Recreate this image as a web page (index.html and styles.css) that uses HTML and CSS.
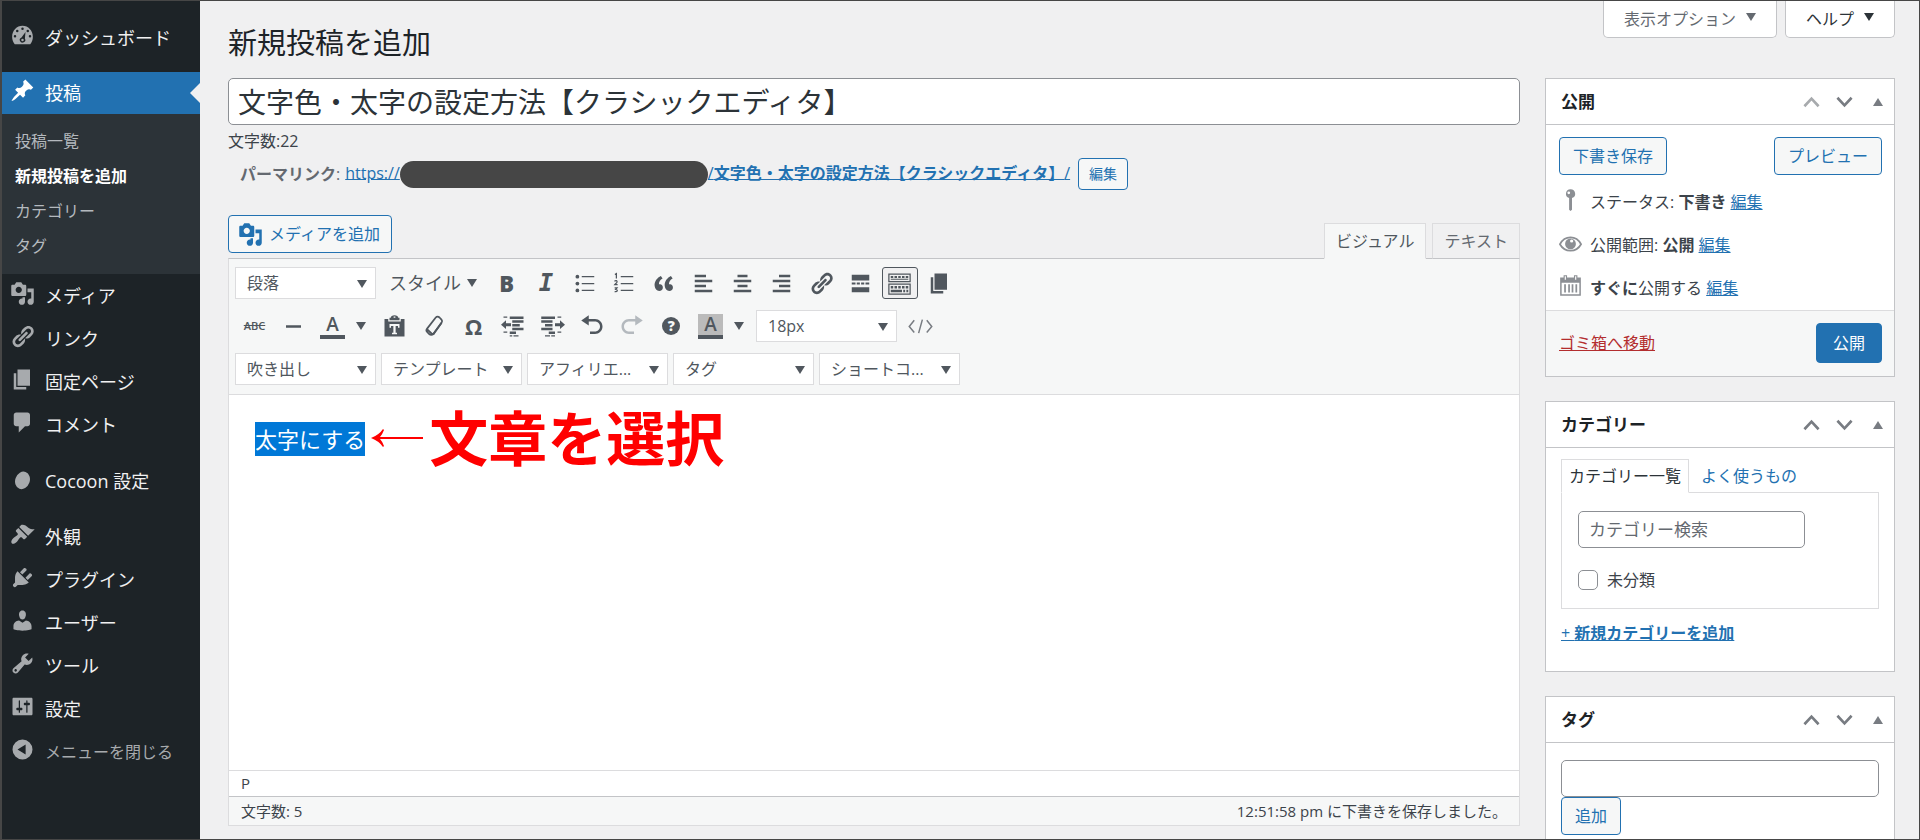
FILE: index.html
```html
<!DOCTYPE html>
<html lang="ja">
<head>
<meta charset="utf-8">
<title>新規投稿を追加</title>
<link rel="stylesheet" href="styles.css">
</head>
<body>
<svg class="defs" aria-hidden="true">
  <symbol id="i-dashboard" viewBox="0 0 20 20"><path fill-rule="evenodd" d="M3.8 17C2.6 15.4 1.700 13.600 1.700 11 1.700 6 5.400 2.200 10 2.200S18.300 6 18.300 11c0 2.600-.9 4.400-2.100 6zM10 3.600a1 1 0 1 0 0 2 1 1 0 0 0 0-2zM5.800 5.300a1 1 0 1 0 0 2 1 1 0 0 0 0-2zM14.200 5.300a1 1 0 1 0 0 2 1 1 0 0 0 0-2zM4 9.500a1 1 0 1 0 0 2 1 1 0 0 0 0-2zM16 9.500a1 1 0 1 0 0 2 1 1 0 0 0 0-2zM12.400 7.200L9.200 11.500a2.200 2.200 0 1 0 2.700.9zM10 12.600a1 1 0 1 1 0 2 1 1 0 0 1 0-2z"/></symbol>
  <symbol id="i-pin" viewBox="0 0 20 20"><path d="M10.440 3.020l1.820-1.820 6.360 6.350-1.830 1.820c-1.050-.68-2.480-.57-3.410.36l-.75.75c-.92.93-1.040 2.350-.35 3.410l-1.830 1.820-2.410-2.410-2.800 2.790c-.42.42-3.380 2.710-3.800 2.290s1.860-3.390 2.280-3.810l2.790-2.790L4.100 9.360l1.830-1.820c1.050.69 2.480.57 3.400-.36l.75-.75c.93-.92 1.050-2.350.36-3.410z"/></symbol>
  <symbol id="i-media" viewBox="0 0 20 20"><path fill-rule="evenodd" d="M13 11V4c0-.55-.45-1-1-1h-1.670L9 1H5L3.670 3H2c-.55 0-1 .45-1 1v7c0 .55.45 1 1 1h10c.55 0 1-.45 1-1zM7 4.500c1.380 0 2.500 1.120 2.500 2.500S8.380 9.500 7 9.500 4.500 8.380 4.500 7 5.620 4.500 7 4.500zM14 6h5v10.500c0 1.380-1.120 2.500-2.500 2.500S14 17.880 14 16.500s1.120-2.500 2.500-2.500c.17 0 .34.02.5.05V9h-3V6zm-4 8.050V13h2v3.500c0 1.380-1.120 2.500-2.500 2.500S7 17.880 7 16.500 8.120 14 9.500 14c.17 0 .34.02.5.05z"/></symbol>
  <symbol id="i-link" viewBox="0 0 20 20"><path d="M17.740 2.760c1.680 1.690 1.680 4.410 0 6.100l-1.530 1.520c-1.120 1.120-2.700 1.470-4.140 1.090l2.620-2.610.76-.77.76-.76c.84-.84.84-2.200 0-3.040-.84-.85-2.200-.85-3.040 0l-.77.76-3.380 3.380c-.37-1.440-.02-3.020 1.100-4.140l1.520-1.530c1.690-1.680 4.420-1.680 6.100 0zM8.590 13.430l5.340-5.340c.42-.42.42-1.100 0-1.520-.44-.43-1.130-.39-1.530 0l-5.330 5.340c-.42.42-.42 1.100 0 1.520.44.43 1.130.39 1.520 0zm-.76 2.290l4.140-4.150c.38 1.440.03 3.020-1.090 4.140l-1.520 1.530c-1.690 1.680-4.410 1.680-6.100 0-1.680-1.680-1.680-4.420 0-6.100l1.530-1.520c1.120-1.120 2.700-1.470 4.140-1.100l-4.140 4.150c-.85.84-.85 2.200 0 3.050.84.840 2.200.84 3.040 0z"/></symbol>
  <symbol id="i-page" viewBox="0 0 20 20"><path d="M6 15V2h10v13H6zm-1 1h8v2H3V5h2v11z"/></symbol>
  <symbol id="i-comment" viewBox="0 0 20 20"><path d="M5 2h9c1.100 0 2 .9 2 2v7c0 1.100-.9 2-2 2h-2l-5 5v-5H5c-1.100 0-2-.9-2-2V4c0-1.100.9-2 2-2z"/></symbol>
  <symbol id="i-cocoon" viewBox="0 0 20 20"><ellipse cx="10" cy="11.500" rx="5.800" ry="7.200" transform="rotate(20 10 11.500)"/></symbol>
  <symbol id="i-brush" viewBox="0 0 20 20"><path d="M14.480 11.060L7.410 3.990l1.500-1.500c.5-.56 2.300-.47 3.510.32 1.210.8 1.430 1.280 2.910 2.100 1.180.64 2.450 1.260 4.450.85zm-.71.71L6.700 4.700 4.930 6.470c-.39.39-.39 1.020 0 1.410l1.060 1.060c.39.39.39 1.030 0 1.420-.6.6-1.430 1.110-2.210 1.690-.35.26-.7.53-1.010.84C1.430 14.230.4 16.080 1.400 17.070c.99 1 2.840-.03 4.180-1.360.31-.31.58-.66.85-1.020.57-.78 1.080-1.610 1.690-2.210.39-.39 1.020-.39 1.410 0l1.060 1.060c.39.39 1.020.39 1.410 0z"/></symbol>
  <symbol id="i-plug" viewBox="0 0 20 20"><path d="M13.110 4.360L9.870 7.600 8 5.730l3.240-3.240c.35-.34 1.050-.2 1.560.32.52.51.66 1.210.31 1.550zm-8 1.770l.91-1.120 9.010 9.010-1.190.84c-.71.71-2.630 1.160-3.820 1.160H6.140L4.900 17.260c-.59.59-1.540.59-2.120 0-.59-.58-.59-1.530 0-2.120l1.240-1.240v-3.880c0-1.130.4-3.190 1.090-3.890zm7.260 3.970l3.240-3.240c.34-.35 1.040-.21 1.550.31.52.51.66 1.210.31 1.550l-3.240 3.250z"/></symbol>
  <symbol id="i-user" viewBox="0 0 20 20"><path d="M10 9.250c-2.270 0-2.730-3.440-2.730-3.440C7 4.020 7.820 2 9.970 2c2.160 0 2.980 2.020 2.710 3.810 0 0-.41 3.440-2.680 3.440zm0 2.570L12.720 10c2.390 0 4.520 2.330 4.520 4.530v2.490s-3.650 1.130-7.240 1.130c-3.650 0-7.240-1.130-7.240-1.130v-2.490c0-2.250 1.940-4.480 4.470-4.480z"/></symbol>
  <symbol id="i-wrench" viewBox="0 0 20 20"><path fill-rule="evenodd" d="M16.680 9.770c-1.340 1.340-3.300 1.670-4.950.99l-5.410 6.520c-.99.99-2.590.99-3.580 0s-.99-2.590 0-3.570l6.520-5.420c-.68-1.650-.35-3.610.99-4.950 1.280-1.280 3.120-1.620 4.720-1.060l-2.890 2.890 2.820 2.820 2.860-2.870c.53 1.580.18 3.390-1.080 4.650zM3.810 16.210c.4.39 1.040.39 1.430 0 .4-.4.4-1.040 0-1.430-.39-.4-1.030-.4-1.430 0-.39.39-.39 1.030 0 1.430z"/></symbol>
  <symbol id="i-settings" viewBox="0 0 20 20"><path fill-rule="evenodd" d="M18 16V4c0-.55-.45-1-1-1H3c-.55 0-1 .45-1 1v12c0 .55.45 1 1 1h14c.55 0 1-.45 1-1zM8 11h1c.55 0 1 .45 1 1s-.45 1-1 1H8v1.500c0 .28-.22.5-.5.5s-.5-.22-.5-.5V13H6c-.55 0-1-.45-1-1s.45-1 1-1h1V5.500c0-.28.22-.5.5-.5s.5.22.5.5V11zm5-2h-1c-.55 0-1-.45-1-1s.45-1 1-1h1V5.500c0-.28.22-.5.5-.5s.5.22.5.5V7h1c.55 0 1 .45 1 1s-.45 1-1 1h-1v5.500c0 .28-.22.5-.5.5s-.5-.22-.5-.5V9z"/></symbol>
  <symbol id="i-collapse" viewBox="0 0 20 20"><path fill-rule="evenodd" d="M10 2a8 8 0 1 0 0 16 8 8 0 0 0 0-16zM12.500 6v8l-6.500-4z"/></symbol>
  <symbol id="i-ul" viewBox="0 0 20 20"><circle cx="3.500" cy="4.500" r="1.500"/><circle cx="3.500" cy="10" r="1.500"/><circle cx="3.500" cy="15.500" r="1.500"/><path d="M7 4h10v1H7zM7 9.500h10v1H7zM7 15h10v1H7z"/></symbol>
  <symbol id="i-ol" viewBox="0 0 20 20"><path d="M7 4h10v1H7zM7 9.500h10v1H7zM7 15h10v1H7z"/><path fill="none" stroke="currentColor" stroke-width="1" d="M2.300 2.800l1.200-.7V6M2 8.300c.8-1 2.400-.6 2 .6-.2.600-1.200 1.200-1.800 2h2.300M2.100 13.500h1.900l-1 1.200c2 0 1.500 2.300-.9 1.800"/></symbol>
  <symbol id="i-quote" viewBox="0 0 20 20"><path d="M9.490 13.220c0-.74-.2-1.380-.61-1.900-.62-.78-1.830-.88-2.530-.72-.29-1.650 1.110-3.750 2.920-4.650L7.880 4c-2.730 1.300-5.420 4.280-4.960 8.050C3.210 14.430 4.590 16 6.540 16c.85 0 1.560-.25 2.120-.75s.83-1.180.83-2.030zm8.050 0c0-.74-.2-1.380-.61-1.900-.63-.78-1.830-.88-2.530-.72-.29-1.650 1.110-3.750 2.920-4.650L15.930 4c-2.730 1.300-5.410 4.280-4.950 8.050.29 2.380 1.660 3.950 3.610 3.950.85 0 1.560-.25 2.120-.75s.83-1.180.83-2.030z"/></symbol>
  <symbol id="i-left" viewBox="0 0 20 20"><path d="M3 3h9v2H3zM3 7h14v2H3zM3 11h9v2H3zM3 15h14v2H3z"/></symbol>
  <symbol id="i-center" viewBox="0 0 20 20"><path d="M6 3h8v2H6zM3 7h14v2H3zM6 11h8v2H6zM3 15h14v2H3z"/></symbol>
  <symbol id="i-right" viewBox="0 0 20 20"><path d="M8 3h9v2H8zM3 7h14v2H3zM8 11h9v2H8zM3 15h14v2H3z"/></symbol>
  <symbol id="i-more" viewBox="0 0 20 20"><path d="M3 3h14v4.500H3zM3 9.200h3v1.600H3zM7 9.200h2.500v1.600H7zM10.500 9.200H13v1.600h-2.500zM14 9.200h3v1.600h-3zM3 13h14v4H3z"/></symbol>
  <symbol id="i-kitchen" viewBox="0 0 20 20"><path fill-rule="evenodd" d="M1 2h18v7H1zM2 3v5h16V3zM1 10h18v9H1zM2 11v7h16v-7z"/><path d="M3 4h2v1.500H3zM6 4h2v1.500H6zM9 4h2v1.500H9zM12 4h2v1.500h-2zM15 4h2v1.500h-2zM3 6.200h14V7H3zM3 12h2v2H3zM6 12h2v2H6zM9 12h2v2H9zM12 12h2v2h-2zM15 12h2v2h-2zM3 15h9v2H3zM13 15h1.500v2H13zM15.500 15H17v2h-1.500z"/></symbol>
  <symbol id="i-hr" viewBox="0 0 20 20"><path d="M4 9h12v2H4z"/></symbol>
  <symbol id="i-paste" viewBox="0 0 20 20"><path fill-rule="evenodd" d="M7 3c0-1.200 1.300-2 3-2s3 .8 3 2h1v2H6V3zM2 4h3v2h10V4h3v14H2zM6 8v3h1.200V9.500h1.900V15H8v1.200h4V15h-1.100V9.500h1.900V11H14V8zM9.300 2h1.400v1H9.300z"/></symbol>
  <symbol id="i-eraser" viewBox="0 0 20 20"><path fill="none" stroke="currentColor" stroke-width="1.400" stroke-linejoin="round" d="M11 2.800c.8-.9 2-.9 3 0l1.600 1.700c.7.800.7 1.700 0 2.600L9 16c-.9 1-2.300 1-3.200.1l-1.700-1.700c-.8-.8-.7-1.800 0-2.700zM4 12.200l4.300 4"/><path d="M15 6.500l.9 1.200L9.500 17l-1.200-1z"/></symbol>
  <symbol id="i-outdent" viewBox="0 0 20 20"><path d="M7 2h11v2H7zM9 5h9v2H9zM9 8h6v2H9zM9 11h9v2H9zM7 14h5v2H7zM7 17h2v1H7zM2 2h3v1H2zM2 14h3v1H2zM10 17h4v1h-4zM0 8.500L4 5v2.300h4v2.400H4V12z"/></symbol>
  <symbol id="i-indent" viewBox="0 0 20 20"><path d="M1 2h11v2H1zM1 5h9v2H1zM4 8h6v2H4zM1 11h9v2H1zM7 14h5v2H7zM9 17h3v1H9zM14 2h3v1h-3zM14 14h3v1h-3zM4 17h4v1H4zM20 8.500L16 5v2.300h-4v2.400h4V12z"/></symbol>
  <symbol id="i-undo" viewBox="0 0 20 20"><path d="M12 4H7V1L1 5.200l6 4V6h5c2.200 0 4 1.800 4 4s-1.800 4-4 4H8v2h4c3.300 0 6-2.700 6-6s-2.700-6-6-6z"/></symbol>
  <symbol id="i-redo" viewBox="0 0 20 20"><path d="M8 4h5V1l6 4.200-6 4V6H8c-2.200 0-4 1.800-4 4s1.800 4 4 4h4v2H8c-3.300 0-6-2.700-6-6s2.700-6 6-6z"/></symbol>
  <symbol id="i-code" viewBox="0 0 20 20"><path fill="none" stroke="currentColor" stroke-width="1.200" d="M5 5L1 10l4 4.800M15 5l4 5-4 4.800M11.500 4.500l-3 10.800"/></symbol>
  <symbol id="i-caret" viewBox="0 0 10 8"><path d="M0 0h10L5 8z"/></symbol>
  <symbol id="i-marker" viewBox="0 0 20 20"><path fill-rule="evenodd" d="M10 1a4 4 0 0 1 1.300 7.800V19l-1.300 1-1.200-1V8.800A4 4 0 0 1 10 1zM8.500 3a1.200 1.200 0 1 0 0 2.400 1.200 1.200 0 0 0 0-2.400z"/></symbol>
  <symbol id="i-eye" viewBox="0 0 20 20"><path fill="none" stroke="currentColor" stroke-width="1.500" d="M.8 11.500C5 3.500 15 3.500 19.200 11.500 15 19 5 19 .8 11.500z"/><path fill-rule="evenodd" d="M10 6.500a4.700 4.700 0 1 0 0 9.400 4.700 4.700 0 0 0 0-9.400zM11 7.300a1.400 1.400 0 1 1 0 2.800 1.400 1.400 0 0 1 0-2.800z"/></symbol>
  <symbol id="i-calendar" viewBox="0 0 20 20"><path fill-rule="evenodd" d="M1 3h3V1h3v2h6V1h3v2h3v16H1zM2.300 7.500v10.200h15.400V7.500zM5 2v3h1V2zM14 2v3h1V2zM4.500 9H6v7H4.500zM8 9h1.500v7H8zM11 9h1.500v7H11zM14.300 9h1.500v7h-1.500z"/></symbol>
  <symbol id="i-up" viewBox="0 0 18 12"><path fill="none" stroke="currentColor" stroke-width="2.800" d="M1.500 10.500L9 2.500l7.500 8"/></symbol>
  <symbol id="i-down" viewBox="0 0 18 12"><path fill="none" stroke="currentColor" stroke-width="2.800" d="M1.500 1.500L9 9.500l7.500-8"/></symbol>
  <symbol id="i-tri" viewBox="0 0 10 8"><path d="M0 8h10L5 0z"/></symbol>
</svg>

<div class="frame">
  <nav class="menu" aria-label="メインメニュー">
    <ul class="menu-list">
      <li><a class="menu-item" href="#"><svg class="icon"><use href="#i-dashboard"/></svg>ダッシュボード</a></li>
      <li class="menu-gap">
        <a class="menu-item current" href="#"><svg class="icon"><use href="#i-pin"/></svg>投稿</a>
        <ul class="submenu">
          <li><a href="#">投稿一覧</a></li>
          <li><a class="active" href="#">新規投稿を追加</a></li>
          <li><a href="#">カテゴリー</a></li>
          <li><a href="#">タグ</a></li>
        </ul>
      </li>
      <li><a class="menu-item" href="#"><svg class="icon"><use href="#i-media"/></svg>メディア</a></li>
      <li><a class="menu-item" href="#"><svg class="icon"><use href="#i-link"/></svg>リンク</a></li>
      <li><a class="menu-item" href="#"><svg class="icon"><use href="#i-page"/></svg>固定ページ</a></li>
      <li><a class="menu-item" href="#"><svg class="icon"><use href="#i-comment"/></svg>コメント</a></li>
      <li class="menu-gap"><a class="menu-item" href="#"><svg class="icon"><use href="#i-cocoon"/></svg>Cocoon 設定</a></li>
      <li class="menu-gap"><a class="menu-item" href="#"><svg class="icon"><use href="#i-brush"/></svg>外観</a></li>
      <li><a class="menu-item" href="#"><svg class="icon"><use href="#i-plug"/></svg>プラグイン</a></li>
      <li><a class="menu-item" href="#"><svg class="icon"><use href="#i-user"/></svg>ユーザー</a></li>
      <li><a class="menu-item" href="#"><svg class="icon"><use href="#i-wrench"/></svg>ツール</a></li>
      <li><a class="menu-item" href="#"><svg class="icon"><use href="#i-settings"/></svg>設定</a></li>
      <li><button class="menu-item collapse" type="button"><svg class="icon"><use href="#i-collapse"/></svg>メニューを閉じる</button></li>
    </ul>
  </nav>

  <main class="main">
    <header class="head">
      <h1>新規投稿を追加</h1>
      <div class="screen-tabs">
        <button type="button">表示オプション<svg class="caret"><use href="#i-caret"/></svg></button>
        <button type="button" class="dark">ヘルプ<svg class="caret"><use href="#i-caret"/></svg></button>
      </div>
    </header>

    <div class="columns">
      <section class="post">
        <input class="title" type="text" aria-label="タイトルを追加" value="文字色・太字の設定方法【クラシックエディタ】">
        <div class="count">文字数:22</div>
        <div class="permalink">
          <span><b>パーマリンク</b>:</span>
          <a href="#">https://<span class="mask"></span>/<b>文字色・太字の設定方法【クラシックエディタ】</b>/</a>
          <button class="btn small" type="button">編集</button>
        </div>

        <div class="editor-tools">
          <button class="btn media" type="button"><svg class="icon"><use href="#i-media"/></svg>メディアを追加</button>
          <div class="editor-tabs">
            <button type="button" class="on">ビジュアル</button>
            <button type="button">テキスト</button>
          </div>
        </div>

        <div class="editor">
          <div class="toolbar">
            <div class="tool-row">
              <span class="pick"><select aria-label="段落"><option>段落</option></select><svg class="caret"><use href="#i-caret"/></svg></span>
              <button type="button" class="style-btn">スタイル<svg class="caret"><use href="#i-caret"/></svg></button>
              <div class="tools main-tools">
                <button type="button" class="bold">B</button>
                <button type="button" class="italic">I</button>
                <button type="button" aria-label="番号なしリスト"><svg class="icon"><use href="#i-ul"/></svg></button>
                <button type="button" aria-label="番号付きリスト"><svg class="icon"><use href="#i-ol"/></svg></button>
                <button type="button" aria-label="引用"><svg class="icon"><use href="#i-quote"/></svg></button>
                <button type="button" aria-label="左寄せ"><svg class="icon"><use href="#i-left"/></svg></button>
                <button type="button" aria-label="中央揃え"><svg class="icon"><use href="#i-center"/></svg></button>
                <button type="button" aria-label="右寄せ"><svg class="icon"><use href="#i-right"/></svg></button>
                <button type="button" aria-label="リンク"><svg class="icon"><use href="#i-link"/></svg></button>
                <button type="button" aria-label="続きを読む"><svg class="icon"><use href="#i-more"/></svg></button>
                <button type="button" class="pressed" aria-label="ツールバー切り替え"><svg class="icon"><use href="#i-kitchen"/></svg></button>
                <button type="button" aria-label="改ページ"><svg class="icon"><use href="#i-page"/></svg></button>
              </div>
            </div>
            <div class="tool-row">
              <div class="tools lead-tools">
                <button type="button" class="strike">ABC</button>
                <button type="button" aria-label="横ライン"><svg class="icon"><use href="#i-hr"/></svg></button>
              </div>
              <div class="split"><button type="button" class="letter">A</button><button type="button" aria-label="テキスト色"><svg class="caret"><use href="#i-caret"/></svg></button></div>
              <div class="tools mid-tools">
                <button type="button" aria-label="テキストとしてペースト"><svg class="icon"><use href="#i-paste"/></svg></button>
                <button type="button" aria-label="書式設定をクリア"><svg class="icon"><use href="#i-eraser"/></svg></button>
                <button type="button" class="omega">Ω</button>
                <button type="button" aria-label="インデントを減らす"><svg class="icon"><use href="#i-outdent"/></svg></button>
                <button type="button" aria-label="インデントを増やす"><svg class="icon"><use href="#i-indent"/></svg></button>
                <button type="button" aria-label="取り消し"><svg class="icon"><use href="#i-undo"/></svg></button>
                <button type="button" class="off" aria-label="やり直し"><svg class="icon"><use href="#i-redo"/></svg></button>
                <button type="button"><span class="help">?</span></button>
              </div>
              <div class="split"><button type="button" class="letter shaded">A</button><button type="button" aria-label="背景色"><svg class="caret"><use href="#i-caret"/></svg></button></div>
              <span class="pick"><select aria-label="フォントサイズ"><option>18px</option></select><svg class="caret"><use href="#i-caret"/></svg></span>
              <div class="tools"><button type="button" class="code" aria-label="ソースコード"><svg class="icon"><use href="#i-code"/></svg></button></div>
            </div>
            <div class="tool-row picks">
              <span class="pick"><select aria-label="吹き出し"><option>吹き出し</option></select><svg class="caret"><use href="#i-caret"/></svg></span>
              <span class="pick"><select aria-label="テンプレート"><option>テンプレート</option></select><svg class="caret"><use href="#i-caret"/></svg></span>
              <span class="pick"><select aria-label="アフィリエイト"><option>アフィリエ...</option></select><svg class="caret"><use href="#i-caret"/></svg></span>
              <span class="pick"><select aria-label="タグ"><option>タグ</option></select><svg class="caret"><use href="#i-caret"/></svg></span>
              <span class="pick"><select aria-label="ショートコード"><option>ショートコ...</option></select><svg class="caret"><use href="#i-caret"/></svg></span>
            </div>
          </div>
          <div class="canvas">
            <p><mark>太字にする</mark></p>
            <div class="note"><svg class="arrow" viewBox="0 0 52 20"><path d="M0 10Q8 7 12 1l1 1Q11 7 9 9h43v2H9q2 2 4 7l-1 1Q8 13 0 10z"/></svg><span>文章を選択</span></div>
          </div>
          <div class="path">P</div>
          <div class="status"><span>文字数: 5</span><span>12:51:58 pm に下書きを保存しました。</span></div>
        </div>
      </section>

      <aside class="side">
        <section class="box">
          <div class="box-head"><h2>公開</h2><button type="button" class="dim" aria-label="上に移動"><svg class="chev"><use href="#i-up"/></svg></button><button type="button" aria-label="下に移動"><svg class="chev"><use href="#i-down"/></svg></button><button type="button" aria-label="パネルを閉じる"><svg class="caret"><use href="#i-tri"/></svg></button></div>
          <div class="publish">
            <div class="publish-buttons"><button class="btn" type="button">下書き保存</button><button class="btn" type="button">プレビュー</button></div>
            <div class="misc"><svg class="icon"><use href="#i-marker"/></svg><span>ステータス: <b>下書き</b> <a href="#">編集</a></span></div>
            <div class="misc"><svg class="icon"><use href="#i-eye"/></svg><span>公開範囲: <b>公開</b> <a href="#">編集</a></span></div>
            <div class="misc"><svg class="icon"><use href="#i-calendar"/></svg><span><b>すぐに</b>公開する <a href="#">編集</a></span></div>
          </div>
          <div class="publish-foot"><a class="trash" href="#">ゴミ箱へ移動</a><button class="btn primary" type="button">公開</button></div>
        </section>

        <section class="box">
          <div class="box-head"><h2>カテゴリー</h2><button type="button" aria-label="上に移動"><svg class="chev"><use href="#i-up"/></svg></button><button type="button" aria-label="下に移動"><svg class="chev"><use href="#i-down"/></svg></button><button type="button" aria-label="パネルを閉じる"><svg class="caret"><use href="#i-tri"/></svg></button></div>
          <div class="inside cats">
            <div class="cat-tabs"><a class="on" href="#">カテゴリー一覧</a><a href="#">よく使うもの</a></div>
            <div class="cat-panel">
              <input class="field" type="search" placeholder="カテゴリー検索" aria-label="カテゴリー検索">
              <label class="check"><input type="checkbox">未分類</label>
            </div>
            <a class="add-cat" href="#">+ <b>新規カテゴリーを追加</b></a>
          </div>
        </section>

        <section class="box">
          <div class="box-head"><h2>タグ</h2><button type="button" aria-label="上に移動"><svg class="chev"><use href="#i-up"/></svg></button><button type="button" aria-label="下に移動"><svg class="chev"><use href="#i-down"/></svg></button><button type="button" aria-label="パネルを閉じる"><svg class="caret"><use href="#i-tri"/></svg></button></div>
          <div class="inside tags">
            <input class="field wide" type="text" aria-label="タグを追加">
            <button class="btn" type="button">追加</button>
          </div>
        </section>
      </aside>
    </div>
  </main>
</div>
</body>
</html>
```
FILE: styles.css
```css
* { box-sizing: border-box; }

body {
  margin: 0;
  background: #f0f0f1;
  color: #3c434a;
  font: 16px/22px "Open Sans", "Noto Sans CJK JP", sans-serif;
}

button, input, select { font: inherit; color: inherit; margin: 0; }
button { background: none; border: 0; padding: 0; cursor: pointer; }
ul { list-style: none; margin: 0; padding: 0; }
h1, h2, p { margin: 0; }
a { color: #2271b1; }
svg { fill: currentColor; flex: none; }

.defs { position: absolute; width: 0; height: 0; }
.icon { width: 25px; height: 25px; display: block; }
.caret { width: 10px; height: 8px; display: block; }

.frame {
  display: flex;
  height: 100vh;
  overflow: hidden;
  border: 1px solid #464646;
  border-left-width: 2px;
}

/* Admin menu */
.menu { flex: none; width: 198px; background: #1d2327; padding-top: 15px; }
.menu-gap { margin-top: 13px; }
.menu-item {
  display: flex;
  align-items: center;
  gap: 10px;
  width: 100%;
  height: 43px;
  padding-left: 8px;
  color: #f0f0f1;
  font-size: 18px;
  text-decoration: none;
}
.menu-item .icon { color: #a7aaad; margin-bottom: 5px; }
.menu-item.current { position: relative; height: 42px; background: #2271b1; color: #fff; }
.menu-item.current .icon { color: #fff; }
.menu-item.current::after {
  content: "";
  position: absolute;
  right: 0;
  top: 11px;
  border: 10px solid transparent;
  border-left-width: 0;
  border-right-color: #f0f0f1;
}
.menu-item.collapse { color: #a7aaad; font-size: 16px; }
.submenu { background: #2c3338; padding: 10px 0; }
.submenu a {
  display: block;
  padding: 6px 13px;
  line-height: 23px;
  color: #b4b9be;
  text-decoration: none;
}
.submenu .active { color: #fff; font-weight: 700; }

/* Page head */
.main { flex: 1; min-width: 0; padding: 0 24px 0 28px; }
.head { display: flex; justify-content: space-between; align-items: flex-start; }
h1 {
  padding: 24px 0 17px;
  color: #1d2327;
  font-size: 29px;
  font-weight: 400;
  line-height: 36px;
}
.screen-tabs { display: flex; gap: 8px; }
.screen-tabs button {
  display: flex;
  align-items: center;
  gap: 10px;
  height: 37px;
  padding: 0 20px;
  background: #fff;
  border: 1px solid #c3c4c7;
  border-top: 0;
  border-radius: 0 0 5px 5px;
  color: #646970;
}
.screen-tabs .caret { margin-bottom: 4px; }
.screen-tabs .dark { color: #2c3338; }

.columns { display: grid; grid-template-columns: minmax(0, 1fr) 350px; gap: 25px; align-items: start; }

/* Buttons */
.btn {
  display: inline-flex;
  align-items: center;
  justify-content: center;
  height: 38px;
  padding: 0 13px;
  background: #f6f7f7;
  border: 1px solid #2271b1;
  border-radius: 4px;
  color: #2271b1;
}
.btn.small { height: 32px; margin-left: 3px; padding: 0 10px; font-size: 14px; }
.btn.media { gap: 6px; padding: 0 11px 0 9px; }
.btn.primary { height: 40px; padding: 0 16px; background: #2271b1; color: #fff; }

/* Title and permalink */
.title {
  display: block;
  width: 100%;
  height: 47px;
  padding: 0 9px 2px;
  border: 1px solid #8c8f94;
  border-radius: 5px;
  background: #fff;
  color: #2c3338;
  font-size: 28px;
}
.count { margin-top: 5px; }
.permalink {
  display: flex;
  align-items: center;
  gap: 5px;
  margin-top: 6px;
  padding-left: 12px;
  color: #646970;
}
.mask {
  display: inline-block;
  width: 308px;
  height: 27px;
  border-radius: 14px;
  background: #464646;
  vertical-align: middle;
}

/* Editor */
.editor-tools { display: flex; justify-content: space-between; height: 43px; margin-top: 25px; }
.editor-tabs { display: flex; gap: 6px; align-items: flex-end; }
.editor-tabs button {
  height: 36px;
  margin-bottom: -1px;
  padding: 0 11px;
  border: 1px solid #dcdcde;
  border-bottom-color: #c3c4c7;
  background: #f0f0f1;
  color: #646970;
}
.editor-tabs .on { position: relative; background: #f6f7f7; border-bottom-color: #f6f7f7; color: #50575e; }

.editor { border: 1px solid #dcdcde; border-top-color: #c3c4c7; background: #fff; }
.toolbar {
  display: flex;
  flex-direction: column;
  gap: 11px;
  padding: 8px 6px 9px;
  background: #f6f7f7;
  border-bottom: 1px solid #dcdcde;
  color: #50575e;
}
.tool-row { display: flex; align-items: center; height: 32px; }
.tool-row.picks { gap: 5px; }
.pick { position: relative; width: 141px; flex: none; }
.pick select {
  appearance: none;
  display: block;
  width: 100%;
  height: 32px;
  padding: 0 24px 0 11px;
  border: 1px solid #dcdcde;
  border-radius: 0;
  background: #fff;
}
.pick .caret { position: absolute; right: 9px; top: 13px; pointer-events: none; }
.style-btn { display: flex; align-items: center; gap: 6px; padding: 0 10px 0 13px; font-size: 18px; }

.tools { display: flex; }
.tools button {
  flex: 1;
  display: flex;
  align-items: center;
  justify-content: center;
  height: 32px;
  margin: 0 2px;
  border: 1px solid transparent;
  border-radius: 3px;
}
.main-tools { width: 472px; }
.lead-tools { width: 78px; }
.mid-tools { width: 316px; }
.tools .pressed { border-color: #50575e; background: #f0f0f1; }
.tools .bold { font-size: 22px; font-weight: 800; }
.tools .italic { font: italic 700 24px "DejaVu Sans Mono", monospace; }
.tools .strike { font-size: 11px; font-weight: 600; text-decoration: line-through; }
.tools .omega { font-size: 22px; font-weight: 700; }
.tools .off { color: #b4b9be; }
.tools .code { color: #787c82; padding: 0 8px; }
.help {
  width: 18px;
  height: 18px;
  border-radius: 50%;
  background: #50575e;
  color: #f6f7f7;
  font-size: 14px;
  font-weight: 800;
  line-height: 18px;
}
.split { display: flex; align-items: center; gap: 11px; padding: 0 9px 0 7px; }
.split + .pick { margin-left: 3px; }
.letter {
  width: 25px;
  height: 25px;
  border-bottom: 4px solid #50575e;
  font-size: 19px;
  font-weight: 600;
  line-height: 20px;
}
.letter.shaded { background: #bbb; }

.canvas { display: flex; align-items: flex-start; gap: 6px; height: 375px; padding: 27px 26px 0; }
.canvas p { font-size: 22px; line-height: 34px; }
.canvas mark { display: block; background: #0078d7; color: #fff; }
.note {
  display: flex;
  align-items: center;
  gap: 6px;
  height: 32px;
  color: #f00;
  font-size: 59px;
  font-weight: 700;
  line-height: 32px;
}
.arrow { width: 52px; height: 20px; }
.path { padding: 1px 12px; height: 26px; border-top: 1px solid #dcdcde; font-size: 15px; }
.status {
  display: flex;
  justify-content: space-between;
  padding: 3px 12px;
  border-top: 1px solid #c3c4c7;
  background: #f6f7f7;
  font-size: 15px;
}

/* Side boxes */
.side { display: grid; gap: 24px; }
.box { border: 1px solid #c3c4c7; background: #fff; }
.box-head {
  display: flex;
  align-items: center;
  height: 46px;
  padding-left: 15px;
  border-bottom: 1px solid #c3c4c7;
}
.box-head h2 { flex: 1; color: #1d2327; font-size: 17px; font-weight: 700; }
.box-head button { display: grid; place-items: center; width: 33px; height: 33px; color: #787c82; }
.box-head .dim { color: #a7aaad; }
.chev { width: 17px; height: 12px; }
.publish { padding: 12px 12px 1px 13px; }
.publish-buttons { display: flex; justify-content: space-between; margin-bottom: 5px; }
.misc { display: flex; align-items: center; gap: 8px; height: 43px; }
.misc .icon { width: 23px; height: 23px; color: #8c8f94; margin: 0 0 4px; }
.publish-foot {
  display: flex;
  align-items: center;
  justify-content: space-between;
  padding: 12px 12px 13px 13px;
  border-top: 1px solid #dcdcde;
  background: #f6f7f7;
}
.trash { color: #b32d2e; }

.inside { padding: 11px 15px; }
.cat-tabs { display: flex; }
.cat-tabs a {
  height: 33px;
  padding: 5px 7px;
  border: 1px solid transparent;
  text-decoration: none;
}
.cat-tabs a + a { margin-left: 4px; }
.cat-tabs .on {
  position: relative;
  height: 34px;
  margin-bottom: -1px;
  border-color: #dcdcde;
  border-bottom-color: #fff;
  background: #fff;
  color: #2c3338;
}
.cat-panel { padding: 18px 16px 17px; border: 1px solid #dcdcde; }
.field {
  appearance: none;
  display: block;
  width: 227px;
  height: 37px;
  padding: 0 10px;
  border: 1px solid #8c8f94;
  border-radius: 5px;
  background: #fff;
  font-size: 17px;
}
.field.wide { width: 100%; }
.field::placeholder { color: #646970; opacity: 1; }
.check { display: flex; align-items: center; gap: 9px; margin-top: 21px; }
.check input {
  appearance: none;
  width: 20px;
  height: 20px;
  border: 1px solid #8c8f94;
  border-radius: 5px;
  background: #fff;
}
.add-cat { display: block; width: fit-content; margin: 13px 0 16px; }
.tags { padding-top: 17px; }
```
